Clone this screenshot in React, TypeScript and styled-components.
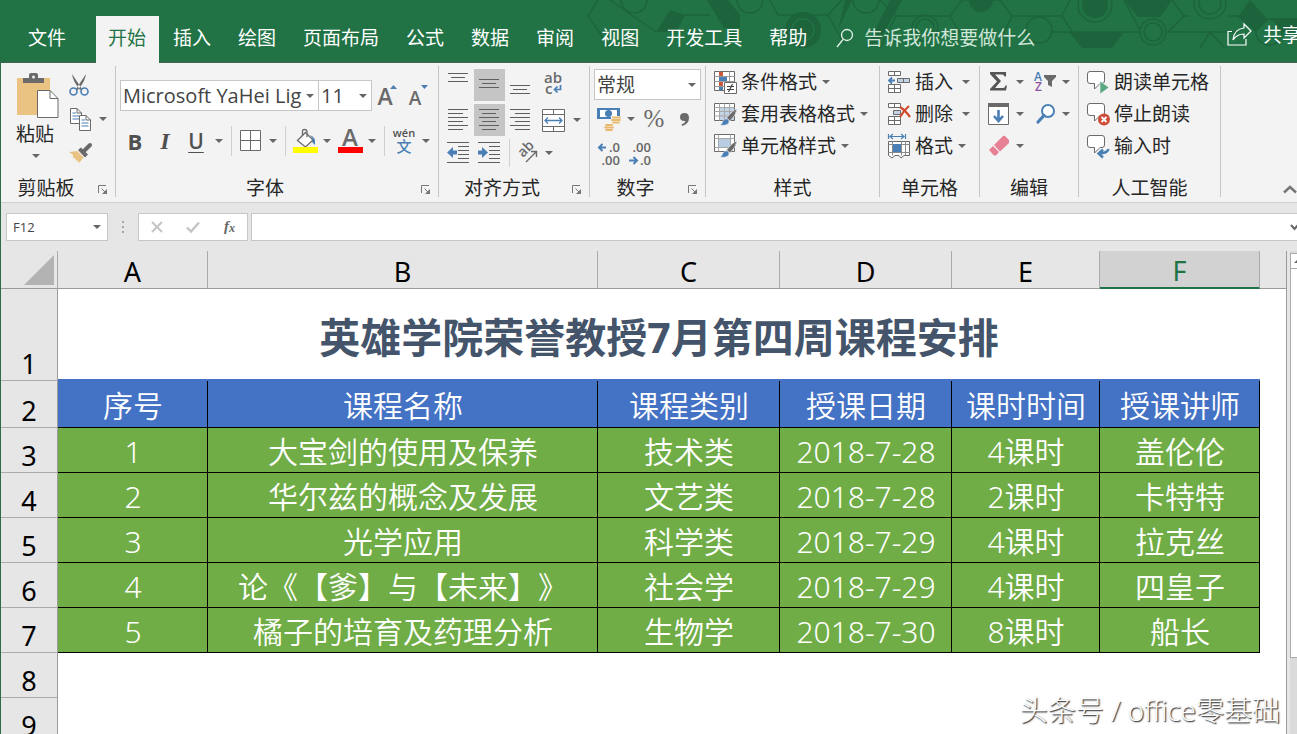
import React from "react";
import styled, { createGlobalStyle, css } from "styled-components";

const uiFont = `"Open Sans", "Noto Sans CJK SC", sans-serif`;
const sheetFont = `"Noto Sans", "Noto Sans CJK SC", sans-serif`;
const ink = "#262626";
const iconGray = "#6a6a6a";
const iconBlue = "#4a7fb5";
const green = "#217346";
const line = "#c6c6c6";

const GlobalStyle = createGlobalStyle`
  *, *::before, *::after { box-sizing: border-box; }
  body { margin: 0; background: #e6e6e6; overflow: hidden; }
  button, input, select {
    margin: 0; padding: 0; border: 0; background: none; color: inherit;
    font: inherit; appearance: none; outline: none; border-radius: 0;
  }
  svg { display: block; flex: none; overflow: visible; }
`;

/* ---------- shell ---------- */

const Shell = styled.div`
  position: relative;
  display: flex;
  flex-direction: column;
  height: 100vh;
  overflow: hidden;
  font: 400 19px/24px ${uiFont};
  color: ${ink};
`;

const Workspace = styled.div`
  display: flex;
  flex-direction: column;
  flex: 1;
  min-height: 0;
  border-left: 1px solid #2f6b49;
  background: #e6e6e6;
`;

/* ---------- title / tab bar ---------- */

const TabBar = styled.header`
  position: relative;
  display: flex;
  align-items: stretch;
  height: 63px;
  padding-top: 16px;
  background: ${green};
  color: #fff;
  overflow: hidden;
  box-shadow: inset 0 -2px 0 #35694c;
`;

const Pattern = styled.svg`
  position: absolute;
  top: 0;
  right: 0;
  overflow: hidden;
`;

const Tabs = styled.nav`
  position: relative;
  display: flex;
  gap: 1px;
`;

const Tab = styled.button<{ $active?: boolean; $wide?: boolean }>`
  padding: ${(p) => (p.$wide ? "0 29px 3px 28px" : p.$active ? "0 13px 3px 12px" : "0 13px 3px")};
  white-space: nowrap;
  ${(p) =>
    p.$active &&
    css`
      background: #f3f3f3;
      color: ${green};
    `}
`;

const TellMe = styled.label`
  position: relative;
  display: flex;
  flex: 1;
  align-items: center;
  gap: 10px;
  padding: 0 0 3px 16px;
  input {
    width: 240px;
    height: 28px;
    color: #cfe6d8;
  }
  input::placeholder {
    color: #cfe6d8;
    opacity: 1;
  }
`;

const Share = styled.button`
  position: relative;
  display: flex;
  align-items: center;
  gap: 11px;
  margin-right: -4px;
  padding-bottom: 10px;
  white-space: nowrap;
`;

/* ---------- ribbon ---------- */

const Ribbon = styled.div`
  display: flex;
  height: 140px;
  padding: 3px 0 5px;
  background: #f3f3f3;
  border-bottom: 1px solid #cfcfcf;
`;

const Group = styled.section<{ $w: number }>`
  display: grid;
  grid-template-rows: 1fr 18px;
  flex: none;
  width: ${(p) => p.$w}px;
  border-right: 1px solid ${line};
`;

const GroupFoot = styled.footer`
  display: flex;
  align-items: center;
  h2 {
    flex: 1;
    margin: 0;
    font: inherit;
    text-align: center;
  }
`;

const Launcher = styled.button`
  display: grid;
  place-items: center;
  align-self: flex-end;
  width: 24px;
  height: 14px;
`;

const Rows = styled.div<{ $top: number; $gap: number }>`
  display: flex;
  flex-direction: column;
  gap: ${(p) => p.$gap}px;
  padding: ${(p) => p.$top}px 4px 0;
`;

const Row = styled.div<{ $h?: number }>`
  display: flex;
  align-items: stretch;
  height: ${(p) => p.$h ?? 32}px;
`;

const Tool = styled.button<{ $w: number; $on?: boolean }>`
  display: grid;
  place-items: center;
  flex: none;
  width: ${(p) => p.$w}px;
  color: #505050;
  background: ${(p) => (p.$on ? "#c5c5c5" : "transparent")};
`;

const Divider = styled.span<{ $w: number }>`
  flex: none;
  width: 1px;
  margin: 0 ${(p) => (p.$w - 1) / 2}px;
  background: #d0d0d0;
`;

const Spacer = styled.span`
  width: 6px;
`;

const Clipboard = styled.div`
  display: flex;
  padding: 2px 0 0 14px;
`;

const Paste = styled.button`
  display: flex;
  flex-direction: column;
  align-items: center;
  width: 46px;
  padding-top: 5px;
  svg:last-child {
    margin: 8px 4px 0 0;
  }
  span {
    margin: 4px 6px 0 0;
  }
`;

const ClipTools = styled.div`
  display: flex;
  flex-direction: column;
  padding-left: 4px;
`;

const Combo = styled.div<{ $w: number; $h: number; $overlap?: boolean }>`
  display: grid;
  align-items: center;
  width: ${(p) => p.$w}px;
  height: ${(p) => p.$h}px;
  margin-left: ${(p) => (p.$overlap ? -1 : 0)}px;
  border: 1px solid ${line};
  background: #fff;
  select,
  svg {
    grid-area: 1 / 1;
  }
  select {
    width: 100%;
    height: 100%;
    padding-left: 2px;
    color: #444;
  }
  svg {
    justify-self: end;
    margin-right: 4px;
    pointer-events: none;
  }
`;

const FontCombo = styled(Combo)`
  font-size: 20px;
`;

const Commands = styled.div`
  display: flex;
  flex-direction: column;
  padding-left: 7px;
`;

const Command = styled.button<{ $split?: boolean }>`
  display: flex;
  align-items: center;
  gap: 4px;
  height: 32px;
  white-space: nowrap;
  svg:nth-of-type(2) {
    margin-left: ${(p) => (p.$split ? 5 : 1)}px;
  }
`;

const CollapseButton = styled.button`
  align-self: flex-end;
  margin-left: auto;
  padding-bottom: 3px;
`;

/* ---------- formula bar ---------- */

const FormulaBar = styled.div`
  display: flex;
  align-items: center;
  height: 48px;
  padding-left: 5px;
`;

const Box = styled.div<{ $w?: number }>`
  display: flex;
  align-items: center;
  ${(p) => (p.$w ? `flex: none; width: ${p.$w}px;` : "flex: 1;")}
  height: 28px;
  border: 1px solid ${line};
  background: #fff;
  font-size: 13px;
  overflow: hidden;
  input {
    flex: 1;
    min-width: 0;
    height: 100%;
    padding-left: 6px;
    color: #444;
  }
`;

const NameBox = styled(Box)`
  padding-right: 6px;
`;

const FormulaInput = styled(Box)`
  margin: 0 -3px 0 3px;
`;

const Dots = styled.svg`
  margin: 0 13px;
`;

/* ---------- sheet ---------- */

const SheetArea = styled.main`
  display: flex;
  flex: 1;
  min-height: 0;
  overflow: hidden;
`;

const Grid = styled.table`
  flex: 1;
  align-self: flex-start;
  width: 100%;
  table-layout: fixed;
  border-collapse: separate;
  border-spacing: 0;
  border-right: 1px solid #9b9b9b;
  background: #fff;
  font-family: ${sheetFont};
  font-size: 30px;
  line-height: 36px;
  text-spacing-trim: space-all;
  th,
  td {
    padding: 0;
    font-weight: 350;
    text-align: center;
    white-space: nowrap;
  }
`;

const ColHead = styled.th<{ $active?: boolean }>`
  height: 38px;
  background: ${(p) => (p.$active ? "#d2d2d2" : "#e6e6e6")};
  border-right: 1px solid #ababab;
  border-bottom: ${(p) => (p.$active ? `2px solid ${green}` : "1px solid #9b9b9b")};
  color: ${(p) => (p.$active ? green : "#000")};
  font-size: 27px;
  line-height: 30px;
  && {
    font-weight: 400;
    padding-top: 4px;
  }
`;

const HeadFiller = styled.th`
  background: #e6e6e6;
  border-bottom: 1px solid #9b9b9b;
`;

const Corner = styled(ColHead)`
  && {
    padding: 0 3px 0 0;
  }
  svg {
    margin-left: auto;
  }
`;

const RowHead = styled.th<{ $h: number }>`
  height: ${(p) => p.$h}px;
  background: #e6e6e6;
  border-right: 1px solid #9b9b9b;
  border-bottom: 1px solid #ababab;
  color: #000;
  font-size: 27px;
  line-height: 32px;
  vertical-align: bottom;
  && {
    font-weight: 400;
  }
`;

const TitleCell = styled.td`
  border-bottom: 2px solid #4472c4;
  color: #44546a;
  font-size: 41px;
  line-height: 60px;
  && {
    font-weight: 700;
    padding-top: 5px;
  }
`;

const Cell = styled.td<{ $head?: boolean }>`
  background: ${(p) => (p.$head ? "#4472c4" : "#70ad47")};
  border-right: 1px solid #000;
  border-bottom: 1px solid #000;
  color: #fff;
  && {
    padding: 3px 0 0 1px;
  }
`;

const ScrollBar = styled.div`
  display: flex;
  flex-direction: column;
  flex: none;
  width: 7px;
  margin-left: 3px;
  padding-top: 2px;
  background: #dadada;
  overflow: hidden;
`;

const ScrollButton = styled.button`
  display: grid;
  align-items: center;
  justify-content: start;
  height: 16px;
  padding-left: 3px;
  border: 1px solid #ababab;
  border-right: 0;
  background: #fff;
`;

const Thumb = styled.div`
  height: 81%;
  margin-top: -1px;
  border: 1px solid #ababab;
  border-right: 0;
  background: #fff;
`;

const Watermark = styled.div`
  position: absolute;
  right: 17px;
  bottom: 6px;
  color: #fff;
  font-size: 28px;
  font-weight: 300;
  line-height: 36px;
  white-space: pre;
  word-spacing: normal;
  text-shadow: 1px 1px 1px #444, 1px 1px 2px #888;
`;

/* ---------- drawings ---------- */

const Caret = () => (
  <svg width="8" height="4" viewBox="0 0 8 4"><path d="M0 0H8L4 4Z" fill="#666" /></svg>
);

const Pic = ({ w = 24, h = 24, children }: { w?: number; h?: number; children: React.ReactNode }) => (
  <svg width={w} height={h} viewBox={`0 0 ${w} ${h}`} fill="none" fontFamily="Open Sans, Noto Sans CJK SC, sans-serif">
    {children}
  </svg>
);

const PasteIcon = () => (
  <Pic w={42} h={45}>
    <path d="M0 5H33V42H0Z" fill="#eac282" />
    <path d="M6 10V5H12V2Q12 0 14 0H19Q21 0 21 2V5H27V10Z" fill={iconGray} />
    <circle cx="16.500" cy="4" r="1.500" fill="#f3f3f3" />
    <path d="M20.500 17.500H33L41 25.500V44.500H20.500Z" fill="#fff" stroke={iconGray} />
    <path d="M33 17.500V25.500H41" stroke={iconGray} />
  </Pic>
);

const CutIcon = () => (
  <Pic w={20} h={22}>
    <path d="M3 0L13 15L11 16L9 13Q4 7 3 0ZM17 0L7 15L9 16L11 13Q16 7 17 0Z" fill={iconGray} />
    <circle cx="4.500" cy="17.500" r="3.500" stroke={iconBlue} strokeWidth="1.600" />
    <circle cx="15.500" cy="17.500" r="3.500" stroke={iconBlue} strokeWidth="1.600" />
  </Pic>
);

const CopyIcon = () => (
  <Pic w={21} h={23}>
    <path d="M.5.5H7L11.500 5V15.500H.5Z" fill="#fff" stroke={iconGray} />
    <path d="M7 .5V5H11.500" stroke={iconGray} />
    <path d="M2.500 5H6M2.500 8H9M2.500 11H9" stroke={iconBlue} />
    <path d="M9.500 7.500H16L20.500 12V22.500H9.500Z" fill="#fff" stroke={iconGray} />
    <path d="M16 7.500V12H20.500" stroke={iconGray} />
    <path d="M11.500 12H15M11.500 15H18.500M11.500 18H18.500" stroke={iconBlue} />
  </Pic>
);

const PainterIcon = () => (
  <Pic w={23} h={21}>
    <path d="M0 9L9 8L15 14L10 20L8 17L7 18L6 15L4 15L4 12Z" fill="#eac282" />
    <path d="M9 7L12 4.500L19 11.500L16 14.500Z" fill={iconGray} />
    <path d="M15 8L21 2" stroke={iconGray} strokeWidth="4" strokeLinecap="round" />
    <path d="M8.500 8L15.500 15" stroke="#f3f3f3" />
  </Pic>
);

const LaunchIcon = () => (
  <Pic w={10} h={10}>
    <path d="M.5 8V.5H8M3.500 3.500L8 8" stroke="#777" />
    <path d="M9 4V9H4Z" fill="#777" />
  </Pic>
);

const BorderIcon = () => (
  <Pic w={22} h={22}>
    <path d="M.5.5H20.500V20.500H.5ZM10.500.5V20.500M.5 10.500H20.500" stroke={iconGray} fill="#fff" />
  </Pic>
);

const FillIcon = () => (
  <Pic w={25} h={24}>
    <path d="M4.500 11.500L12.500 3.500L20 11L12.500 18Z" fill="#fff" stroke={iconGray} strokeWidth="1.300" />
    <path d="M9.500 7V2Q9.500.5 11.500.5T14 2V8" stroke={iconGray} strokeWidth="1.300" />
    <path d="M17 6Q23 8 22 16L19 13L20 10Z" fill={iconBlue} />
    <path d="M0 18H25V24H0Z" fill="#ff0" />
  </Pic>
);

const FontColorIcon = () => (
  <Pic w={25} h={24}>
    <text x="12" y="17" textAnchor="middle" fontSize="24" fontWeight="600" fill={iconGray}>A</text>
    <path d="M0 18H25V24H0Z" fill="#f00" />
  </Pic>
);

const PhoneticIcon = () => (
  <Pic w={24} h={26}>
    <text x="12" y="9" textAnchor="middle" fontSize="11" fontWeight="600" fill="#505050">wén</text>
    <text x="12" y="24" textAnchor="middle" fontSize="15" fontWeight="500" fill={iconBlue}>文</text>
  </Pic>
);

const GrowIcon = () => (
  <Pic w={22} h={24}>
    <text x="8" y="21" textAnchor="middle" fontSize="23" fontWeight="600" fill={iconGray}>A</text>
    <path d="M13 5H20L16.500 1Z" fill={iconBlue} />
  </Pic>
);

const ShrinkIcon = () => (
  <Pic w={22} h={24}>
    <text x="7" y="21" textAnchor="middle" fontSize="19" fontWeight="600" fill={iconGray}>A</text>
    <path d="M13 1H20L16.500 5Z" fill={iconBlue} />
  </Pic>
);

const Lines = ({ h, rows }: { h: number; rows: [number, number, number][] }) => (
  <Pic w={21} h={h}>
    {rows.map(([x1, x2, y]) => (
      <path key={y} d={`M${x1} ${y}.500H${x2}`} stroke="#5f5f5f" />
    ))}
  </Pic>
);

const WrapIcon = () => (
  <Pic w={22} h={26}>
    <text x="10" y="11" textAnchor="middle" fontSize="15" fontWeight="600" fill={iconGray}>ab</text>
    <text x="2" y="22" fontSize="15" fontWeight="600" fill={iconGray}>c</text>
    <path d="M17.500 13V17.500H12M14.500 14.500L11.500 17.500L14.500 20.500" stroke={iconBlue} strokeWidth="1.700" />
  </Pic>
);

const MergeIcon = () => (
  <Pic w={23} h={23}>
    <path d="M.5.5H22.500V22.500H.5ZM.5 5.500H22.500M.5 17.500H22.500M11.500.5V5.500M11.500 17.500V22.500" fill="#fff" stroke={iconGray} />
    <path d="M3 11.500H20M6 8.500L3 11.500L6 14.500M17 8.500L20 11.500L17 14.500" stroke={iconBlue} strokeWidth="1.300" />
  </Pic>
);

const IndentIcon = ({ right }: { right?: boolean }) => (
  <Pic w={23} h={22}>
    <path d="M0 .5H22M11 4.500H22M11 8.500H22M11 12.500H22M11 16.500H22M0 20.500H22" stroke="#5f5f5f" />
    {right ? (
      <path d="M0 8.500H4V5L10 10.500L4 16V12.500H0Z" fill={iconBlue} />
    ) : (
      <path d="M10 8.500H6V5L0 10.500L6 16V12.500H10Z" fill={iconBlue} />
    )}
  </Pic>
);

const OrientIcon = () => (
  <Pic w={22} h={22}>
    <text x="0" y="0" transform="translate(6 16) rotate(-45)" fontSize="14" fontWeight="600" fill={iconGray}>ab</text>
    <path d="M9 20L19 10M14 9.500H19.500V15" stroke={iconGray} strokeWidth="1.400" />
  </Pic>
);

const MoneyIcon = () => (
  <Pic w={24} h={24}>
    <path d="M0 1H23V12H0Z" fill={iconBlue} />
    <path d="M3 3H20V10H3Z" fill="#fff" />
    <circle cx="11.500" cy="6.500" r="3.500" fill={iconBlue} />
    <path d="M14 9H24V19H18V24H7V16H14Z" fill="#f3f3f3" />
    <path d="M16 10.500H23M15 13H23M16 15.500H22M9 18H15M8 20.500H16M9 23H15" stroke="#e8b96f" strokeWidth="1.800" strokeLinecap="round" />
  </Pic>
);

const PercentIcon = () => (
  <Pic w={22} h={24}>
    <text x="11" y="20" textAnchor="middle" fontFamily="Liberation Serif, serif" fontSize="25" fill={iconGray}>%</text>
  </Pic>
);

const CommaIcon = () => (
  <Pic w={10} h={13}>
    <path d="M4.500 0Q9 0 9 5Q9 11 2 13L1.500 11.500Q5 10 5.500 8Q0 8.500 0 4Q0 0 4.500 0Z" fill={iconGray} />
  </Pic>
);

const DecimalIcon = ({ less }: { less?: boolean }) => (
  <Pic w={24} h={26}>
    <text x="22" y="11" textAnchor="end" fontSize="13" fontWeight="600" fill="#666">{less ? ".00" : ".0"}</text>
    <text x="22" y="24" textAnchor="end" fontSize="13" fontWeight="600" fill="#666">{less ? ".0" : ".00"}</text>
    {less ? (
      <path d="M0 19.500H7M4.500 16L8 19.500L4.500 23" stroke={iconBlue} strokeWidth="2" />
    ) : (
      <path d="M1 6.500H8M4.500 3L1 6.500L4.500 10" stroke={iconBlue} strokeWidth="2" />
    )}
  </Pic>
);

const CondIcon = () => (
  <Pic>
    <path d="M1.500 1.500H21.500V20.500H1.500Z" fill="#fff" stroke={iconGray} />
    <path d="M1.500 6.500H21.500M1.500 11.500H21.500M1.500 16.500H21.500M6.500 1.500V20.500M16.500 1.500V20.500" stroke="#9a9a9a" />
    <path d="M6 2H10V6H6ZM6 12H10V16H6Z" fill="#c8593d" />
    <path d="M6 7H14V11H6ZM6 17H10V20H6Z" fill={iconBlue} />
    <path d="M11.500 12.500H23.500V23.500H11.500Z" fill="#fff" stroke={iconGray} />
    <path d="M14 16.500H21M14 19.500H21M19.500 14L15.500 22" stroke="#444" strokeWidth="1.200" />
  </Pic>
);

const Brush = () => (
  <>
    <path d="M24 7Q20 8 13.500 16L17 19Q23 13 24 7Z" fill={iconGray} stroke="#f3f3f3" strokeWidth=".6" />
    <path d="M7 23Q9 22 10 19Q12 16 15 17Q17 20 15 22Q12 24 7 23Z" fill={iconBlue} stroke="#f3f3f3" strokeWidth=".5" />
  </>
);

const TableStyleIcon = () => (
  <Pic>
    <path d="M1.500 1.500H21.500V18.500H1.500Z" fill="#fff" stroke={iconGray} />
    <path d="M7 6H21V18H7Z" fill="#c3d4e6" />
    <path d="M1.500 5.500H21.500M1.500 9.500H21.500M1.500 14H21.500M6.500 1.500V18.500M11.500 1.500V18.500M16.500 1.500V18.500" stroke="#a8a8a8" />
    <Brush />
  </Pic>
);

const CellStyleIcon = () => (
  <Pic>
    <path d="M1.500.5H21.500V17.500H1.500Z" fill="#fff" stroke={iconGray} />
    <path d="M6 5H18V14H6Z" fill="#b9cde2" />
    <path d="M1.500 4.500H21.500M1.500 13.500H21.500M5.500.5V17.500M17.500.5V17.500" stroke="#a8a8a8" />
    <Brush />
  </Pic>
);

const InsertIcon = () => (
  <Pic>
    <path d="M1.500 1.500H13.500V5.500H1.500ZM7.500 1.500V5.500M1.500 14.500H13.500V22.500H1.500ZM1.500 18.500H13.500M7.500 14.500V22.500" fill="#fff" stroke={iconGray} />
    <path d="M10.500 8.500H22.500V12.500H10.500ZM16.500 8.500V12.500" fill="#c3d4e6" stroke={iconGray} />
    <path d="M2 10.500H8M5 7.500L2 10.500L5 13.500" stroke={iconBlue} strokeWidth="1.800" />
  </Pic>
);

const DeleteIcon = () => (
  <Pic>
    <path d="M1.500 1.500H13.500V5.500H1.500ZM7.500 1.500V5.500M1.500 14.500H13.500V22.500H1.500ZM1.500 18.500H13.500M7.500 14.500V22.500" fill="#fff" stroke={iconGray} />
    <path d="M6.500 8.500H13.500V12.500H6.500Z" fill="#c3d4e6" stroke={iconGray} />
    <path d="M13 5Q18 8 23 15M22 4Q17 8 13 15" stroke="#d0492d" strokeWidth="2.200" />
  </Pic>
);

const FormatIcon = () => (
  <Pic w={24} h={26}>
    <path d="M1.500 1V6M18.500 1V6M3 3.500H17M6 1L3 3.500L6 6M14 1L17 3.500L14 6" stroke={iconBlue} strokeWidth="1.200" />
    <path d="M1.500 8.500H22.500V22.500H17L14 25L12 22.500H8L5 25L1.500 22.500Z" fill="#fff" stroke={iconGray} />
    <path d="M1.500 11.500H22.500M1.500 19.500H22.500M5.500 8.500V22.500M14.500 8.500V22.500M18.500 8.500V22.500" stroke="#8a8a8a" />
    <path d="M6 11H14V19H6Z" fill={iconBlue} />
  </Pic>
);

const SumIcon = () => (
  <Pic w={20} h={24}>
    <path d="M1 2H17V6.500H15.500Q15 4.500 13 4.500H6L12 11L6 18H14Q16 18 16.500 15.500H18L17 20.500H1V19L8 11.500L1 4Z" fill="#555" />
  </Pic>
);

const SortIcon = () => (
  <Pic w={24} h={24}>
    <text x="0" y="11" fontSize="12" fontWeight="600" fill={iconBlue}>A</text>
    <text x="1" y="21" fontSize="12" fontWeight="600" fill="#8e55a5">Z</text>
    <path d="M10 5H22V7L18 11V17L14 15V11L10 7Z" fill={iconGray} />
  </Pic>
);

const FillDownIcon = () => (
  <Pic w={22} h={24}>
    <path d="M.5 1.500H20.500V22.500H.5Z" fill="#fff" stroke={iconGray} />
    <path d="M0 1H21V5H0Z" fill={iconGray} />
    <path d="M10.500 8V19M6 14L10.500 19L15 14" stroke={iconBlue} strokeWidth="2.600" />
  </Pic>
);

const FindIcon = () => (
  <Pic w={22} h={22}>
    <circle cx="13" cy="8" r="6" fill="#fff" stroke={iconBlue} strokeWidth="2" />
    <path d="M9 12.500L3 19" stroke={iconBlue} strokeWidth="3.200" strokeLinecap="round" />
  </Pic>
);

const EraserIcon = () => (
  <Pic w={22} h={22}>
    <path d="M1 15L5 11L11 17L8 20.500H6Z" fill="#e58095" />
    <path d="M6 10L15 1Q16 .5 17 1L21 5V8L12 16.500Z" fill="#e58095" />
  </Pic>
);

const Bubble = () => (
  <path d="M4 1.500H16Q18.500 1.500 18.500 4V11Q18.500 13.500 16 13.500H14L8.500 19V13.500H4Q1.500 13.500 1.500 11V4Q1.500 1.500 4 1.500Z" fill="#fff" stroke={iconGray} />
);

const SpeakIcon = () => (
  <Pic><Bubble /><path d="M14 11L23 17.500L14 24Z" fill="#5aa784" stroke="#f3f3f3" strokeWidth=".6" /></Pic>
);

const StopIcon = () => (
  <Pic>
    <Bubble />
    <circle cx="18" cy="17.500" r="6" fill="#cf4a37" />
    <path d="M15.500 15L20.500 20M20.500 15L15.500 20" stroke="#fff" strokeWidth="1.800" />
  </Pic>
);

const EnterIcon = () => (
  <Pic>
    <Bubble />
    <path d="M22.500 15Q22 19 13 19.500M17 15.500L12.500 19.500L17 23.500" stroke="#f3f3f3" strokeWidth="4" />
    <path d="M22.500 15Q22 19 13 19.500M17 15.500L12.500 19.500L17 23.500" stroke={iconBlue} strokeWidth="2.400" />
  </Pic>
);

const HeaderPattern = () => (
  <Pattern width="727" height="50" viewBox="570 0 727 50" fill="none" stroke="#1d643c" strokeWidth="1.500">
    <g fill="#1d643c" stroke="none">
      <path d="M656 32L670 10L685 15L676 32ZM707 0H728L740 15V28H724ZM866 48L890 0H902L880 40ZM845 0H852L838 30ZM1124 0H1172L1160 17H1138ZM1069 32H1124L1112 48H1082ZM1238 17L1250 0L1268 20L1256 32Z" />
      <circle cx="803" cy="30" r="18" /><circle cx="981" cy="0" r="12" /><circle cx="1095" cy="5" r="13" />
      <path d="M1272 18H1297V32H1280Z" />
    </g>
    <circle cx="634" cy="0" r="13" /><circle cx="750" cy="0" r="13" /><circle cx="866" cy="0" r="13" />
    <circle cx="803" cy="30" r="11" stroke="#217346" />
    <circle cx="925" cy="28" r="13" /><circle cx="925" cy="28" r="9" />
    <circle cx="1039" cy="30" r="13" /><circle cx="1095" cy="5" r="17" />
    <circle cx="1153" cy="32" r="13" /><circle cx="1153" cy="32" r="9" />
    <circle cx="1210" cy="3" r="16" /><circle cx="1210" cy="3" r="11" /><circle cx="1269" cy="32" r="13" />
    <path d="M598 0L588 16L610 48M610 0L656 32M685 15H710M740 15L728 48M770 0L778 15H828L842 0M828 15L845 45M880 0L896 16H950L962 0M896 16L880 48M950 16L968 48M962 0L1000 0L1012 16H1062L1070 0M1012 16L996 48M1062 16L1078 40M1052 32H1140M1124 0L1140 30M1172 0L1184 16L1168 32H1238M1184 16H1190M1228 16H1240M1200 48L1210 32L1225 48" />
  </Pattern>
);

/* ---------- data ---------- */

const tabs = ["开始", "插入", "绘图", "页面布局", "公式", "数据", "审阅", "视图", "开发工具", "帮助"];
const columns = ["A", "B", "C", "D", "E", "F"];
const widths = [57, 150, 390, 182, 172, 148, 160];
const heading = ["序号", "课程名称", "课程类别", "授课日期", "课时时间", "授课讲师"];
const lessons = [
  ["1", "大宝剑的使用及保养", "技术类", "2018-7-28", "4课时", "盖伦伦"],
  ["2", "华尔兹的概念及发展", "文艺类", "2018-7-28", "2课时", "卡特特"],
  ["3", "光学应用", "科学类", "2018-7-29", "4课时", "拉克丝"],
  ["4", "论《【爹】与【未来】》", "社会学", "2018-7-29", "4课时", "四皇子"],
  ["5", "橘子的培育及药理分析", "生物学", "2018-7-30", "8课时", "船长"],
];

const RibbonGroup = ({ w, name, launcher, children }: { w: number; name: string; launcher?: boolean; children: React.ReactNode }) => (
  <Group $w={w} aria-label={name}>
    {children}
    <GroupFoot>
      <h2>{name}</h2>
      {launcher && <Launcher aria-label={`${name}设置`}><LaunchIcon /></Launcher>}
    </GroupFoot>
  </Group>
);

const More = ({ w, of }: { w: number; of: string }) => (
  <Tool $w={w} aria-label={`${of}选项`}><Caret /></Tool>
);

const BoldMark = styled.b`
  font: 700 22px/26px ${uiFont};
`;
const ItalicMark = styled.i`
  font: italic 700 24px/26px "Liberation Serif", serif;
`;
const UnderMark = styled.u`
  font: 600 21px/26px ${uiFont};
  text-decoration-thickness: 1px;
  text-underline-offset: 3px;
`;

export default function App() {
  return (
    <Shell>
      <GlobalStyle />
      <TabBar>
        <HeaderPattern />
        <Tabs aria-label="功能区">
          <Tab $wide>文件</Tab>
          {tabs.map((t, i) => <Tab key={t} $active={i === 0}>{t}</Tab>)}
        </Tabs>
        <TellMe>
          <Pic w={18} h={20}>
            <circle cx="11" cy="7" r="5.500" stroke="#e4f1e9" strokeWidth="1.300" />
            <path d="M7 11.500L1 19" stroke="#e4f1e9" strokeWidth="1.300" />
          </Pic>
          <input aria-label="操作说明搜索" placeholder="告诉我你想要做什么" />
        </TellMe>
        <Share>
          <Pic w={25} h={23}>
            <path d="M5 8.500H1V22H19V16" stroke="#fff" strokeWidth="1.200" />
            <path d="M17 1L24 8L17 15V11Q10 11 6 17Q7 6 17 5Z" stroke="#fff" strokeWidth="1.200" />
          </Pic>
          共享
        </Share>
      </TabBar>

      <Workspace>
        <Ribbon>
          <RibbonGroup w={115} name="剪贴板" launcher>
            <Clipboard>
              <Paste><PasteIcon /><span>粘贴</span><Caret /></Paste>
              <ClipTools>
                <Row $h={34}><Tool $w={28} aria-label="剪切"><CutIcon /></Tool></Row>
                <Row $h={34}><Tool $w={30} aria-label="复制"><CopyIcon /></Tool><More w={16} of="复制" /></Row>
                <Row $h={34}><Tool $w={30} aria-label="格式刷"><PainterIcon /></Tool></Row>
              </ClipTools>
            </Clipboard>
          </RibbonGroup>

          <RibbonGroup w={323} name="字体" launcher>
            <Rows $top={14} $gap={15}>
              <Row $h={31}>
                <FontCombo $w={199} $h={31}>
                  <select aria-label="字体"><option>Microsoft YaHei Lig</option></select>
                  <Caret />
                </FontCombo>
                <FontCombo $w={54} $h={31} $overlap>
                  <select aria-label="字号"><option>11</option></select>
                  <Caret />
                </FontCombo>
                <Tool $w={32} aria-label="增大字号"><GrowIcon /></Tool>
                <Tool $w={30} aria-label="减小字号"><ShrinkIcon /></Tool>
              </Row>
              <Row $h={30}>
                <Tool $w={30} aria-label="加粗"><BoldMark>B</BoldMark></Tool>
                <Tool $w={30} aria-label="倾斜"><ItalicMark>I</ItalicMark></Tool>
                <Tool $w={32} aria-label="下划线"><UnderMark>U</UnderMark></Tool>
                <More w={14} of="下划线" />
                <Divider $w={11} />
                <Tool $w={28} aria-label="边框"><BorderIcon /></Tool>
                <More w={15} of="边框" />
                <Divider $w={11} />
                <Tool $w={28} aria-label="填充颜色"><FillIcon /></Tool>
                <More w={16} of="填充颜色" />
                <Tool $w={30} aria-label="字体颜色"><FontColorIcon /></Tool>
                <More w={14} of="字体颜色" />
                <Divider $w={11} />
                <Tool $w={28} aria-label="拼音"><PhoneticIcon /></Tool>
                <More w={16} of="拼音" />
              </Row>
            </Rows>
          </RibbonGroup>

          <RibbonGroup w={151} name="对齐方式" launcher>
            <Rows $top={3} $gap={3}>
              <Row>
                <Tool $w={31} aria-label="顶端对齐"><Lines h={24} rows={[[0, 20, 0], [3, 17, 4], [0, 20, 8]]} /></Tool>
                <Tool $w={31} $on aria-label="垂直居中"><Lines h={24} rows={[[0, 20, 6], [3, 17, 10], [0, 20, 14]]} /></Tool>
                <Tool $w={31} aria-label="底端对齐"><Lines h={24} rows={[[0, 20, 12], [3, 17, 16], [0, 20, 20]]} /></Tool>
                <Tool $w={35} aria-label="自动换行"><WrapIcon /></Tool>
              </Row>
              <Row>
                <Tool $w={31} aria-label="左对齐"><Lines h={22} rows={[[0, 20, 0], [0, 15, 4], [0, 20, 8], [0, 15, 12], [0, 20, 16], [0, 15, 20]]} /></Tool>
                <Tool $w={31} $on aria-label="居中"><Lines h={22} rows={[[0, 20, 0], [3, 17, 4], [0, 20, 8], [3, 17, 12], [0, 20, 16], [3, 17, 20]]} /></Tool>
                <Tool $w={31} aria-label="右对齐"><Lines h={22} rows={[[0, 20, 0], [5, 20, 4], [0, 20, 8], [5, 20, 12], [0, 20, 16], [5, 20, 20]]} /></Tool>
                <Tool $w={35} aria-label="合并后居中"><MergeIcon /></Tool>
                <More w={12} of="合并后居中" />
              </Row>
              <Row $h={28}>
                <Tool $w={31} aria-label="减少缩进量"><IndentIcon /></Tool>
                <Tool $w={31} aria-label="增加缩进量"><IndentIcon right /></Tool>
                <Divider $w={9} />
                <Tool $w={28} aria-label="方向"><OrientIcon /></Tool>
                <More w={14} of="方向" />
              </Row>
            </Rows>
          </RibbonGroup>

          <RibbonGroup w={116} name="数字" launcher>
            <Rows $top={3} $gap={3}>
              <Row $h={31}>
                <Combo $w={107} $h={31}>
                  <select aria-label="数字格式"><option>常规</option></select>
                  <Caret />
                </Combo>
              </Row>
              <Row>
                <Tool $w={30} aria-label="会计数字格式"><MoneyIcon /></Tool>
                <More w={14} of="会计数字格式" />
                <Tool $w={31} aria-label="百分比样式"><PercentIcon /></Tool>
                <Tool $w={32} aria-label="千位分隔样式"><CommaIcon /></Tool>
              </Row>
              <Row>
                <Tool $w={31} aria-label="增加小数位数"><DecimalIcon /></Tool>
                <Tool $w={31} aria-label="减少小数位数"><DecimalIcon less /></Tool>
              </Row>
            </Rows>
          </RibbonGroup>

          <RibbonGroup w={174} name="样式">
            <Commands>
              <Command><CondIcon />条件格式<Caret /></Command>
              <Command><TableStyleIcon />套用表格格式<Caret /></Command>
              <Command><CellStyleIcon />单元格样式<Caret /></Command>
            </Commands>
          </RibbonGroup>

          <RibbonGroup w={100} name="单元格">
            <Commands>
              <Command $split><InsertIcon />插入<Caret /></Command>
              <Command $split><DeleteIcon />删除<Caret /></Command>
              <Command><FormatIcon />格式<Caret /></Command>
            </Commands>
          </RibbonGroup>

          <RibbonGroup w={99} name="编辑">
            <Rows $top={0} $gap={0}>
              <Row>
                <Tool $w={30} aria-label="自动求和"><SumIcon /></Tool>
                <More w={12} of="自动求和" />
                <Spacer />
                <Tool $w={28} aria-label="排序和筛选"><SortIcon /></Tool>
                <More w={12} of="排序和筛选" />
              </Row>
              <Row>
                <Tool $w={30} aria-label="填充"><FillDownIcon /></Tool>
                <More w={12} of="填充" />
                <Spacer />
                <Tool $w={28} aria-label="查找和选择"><FindIcon /></Tool>
                <More w={12} of="查找和选择" />
              </Row>
              <Row>
                <Tool $w={30} aria-label="清除"><EraserIcon /></Tool>
                <More w={12} of="清除" />
              </Row>
            </Rows>
          </RibbonGroup>

          <RibbonGroup w={142} name="人工智能">
            <Commands>
              <Command><SpeakIcon />朗读单元格</Command>
              <Command><StopIcon />停止朗读</Command>
              <Command><EnterIcon />输入时</Command>
            </Commands>
          </RibbonGroup>

          <CollapseButton aria-label="折叠功能区">
            <Pic w={14} h={9}><path d="M1 7.500L7 2L13 7.500" stroke="#777" strokeWidth="2.500" /></Pic>
          </CollapseButton>
        </Ribbon>

        <FormulaBar>
          <NameBox $w={102}>
            <input aria-label="名称框" defaultValue="F12" />
            <Caret />
          </NameBox>
          <Dots width="4" height="12" viewBox="0 0 4 12">
            <path d="M1 0H3V2H1ZM1 5H3V7H1ZM1 10H3V12H1Z" fill="#a6a6a6" />
          </Dots>
          <Box $w={110}>
            <Tool $w={36} aria-label="取消">
              <Pic w={12} h={12}><path d="M1 1L11 11M11 1L1 11" stroke="#c4c4c4" strokeWidth="2" /></Pic>
            </Tool>
            <Tool $w={36} aria-label="输入">
              <Pic w={14} h={12}><path d="M1 6.500L5 10.500L13 1.500" stroke="#c4c4c4" strokeWidth="2.400" /></Pic>
            </Tool>
            <Tool $w={36} aria-label="插入函数">
              <Pic w={16} h={18}>
                <text x="3" y="13" fontFamily="Liberation Serif, serif" fontStyle="italic" fontWeight="700" fontSize="15" fill="#666">f</text>
                <text x="8" y="14" fontFamily="Liberation Serif, serif" fontStyle="italic" fontWeight="700" fontSize="12" fill="#666">x</text>
              </Pic>
            </Tool>
          </Box>
          <FormulaInput>
            <input aria-label="编辑栏" />
            <Pic w={9} h={7}><path d="M1 1L4.500 5L8 1" stroke="#666" strokeWidth="2" /></Pic>
          </FormulaInput>
        </FormulaBar>

        <SheetArea>
          <Grid>
            <colgroup>
              {widths.map((w, i) => <col key={i} width={w} />)}
              <col />
            </colgroup>
            <thead>
              <tr>
                <Corner aria-label="全选">
                  <Pic w={30} h={30}><path d="M30 0V30H0Z" fill="#b3b3b3" /></Pic>
                </Corner>
                {columns.map((c) => <ColHead key={c} scope="col" $active={c === "F"}>{c}</ColHead>)}
                <HeadFiller />
              </tr>
            </thead>
            <tbody>
              <tr>
                <RowHead scope="row" $h={92}>1</RowHead>
                <TitleCell colSpan={6}>英雄学院荣誉教授7月第四周课程安排</TitleCell>
                <td />
              </tr>
              <tr>
                <RowHead scope="row" $h={47}>2</RowHead>
                {heading.map((h) => <Cell key={h} $head>{h}</Cell>)}
                <td />
              </tr>
              {lessons.map((r, i) => (
                <tr key={r[0]}>
                  <RowHead scope="row" $h={45}>{i + 3}</RowHead>
                  {r.map((v, j) => <Cell key={j}>{v}</Cell>)}
                  <td />
                </tr>
              ))}
              {[8, 9].map((n) => (
                <tr key={n}>
                  <RowHead scope="row" $h={45}>{n}</RowHead>
                  <td colSpan={7} />
                </tr>
              ))}
            </tbody>
          </Grid>
          <ScrollBar>
            <ScrollButton aria-label="向上滚动">
              <Pic w={8} h={4}><path d="M0 4L4 0L8 4Z" fill="#666" /></Pic>
            </ScrollButton>
            <Thumb />
          </ScrollBar>
        </SheetArea>
      </Workspace>
      <Watermark>头条号 / office零基础</Watermark>
    </Shell>
  );
}
